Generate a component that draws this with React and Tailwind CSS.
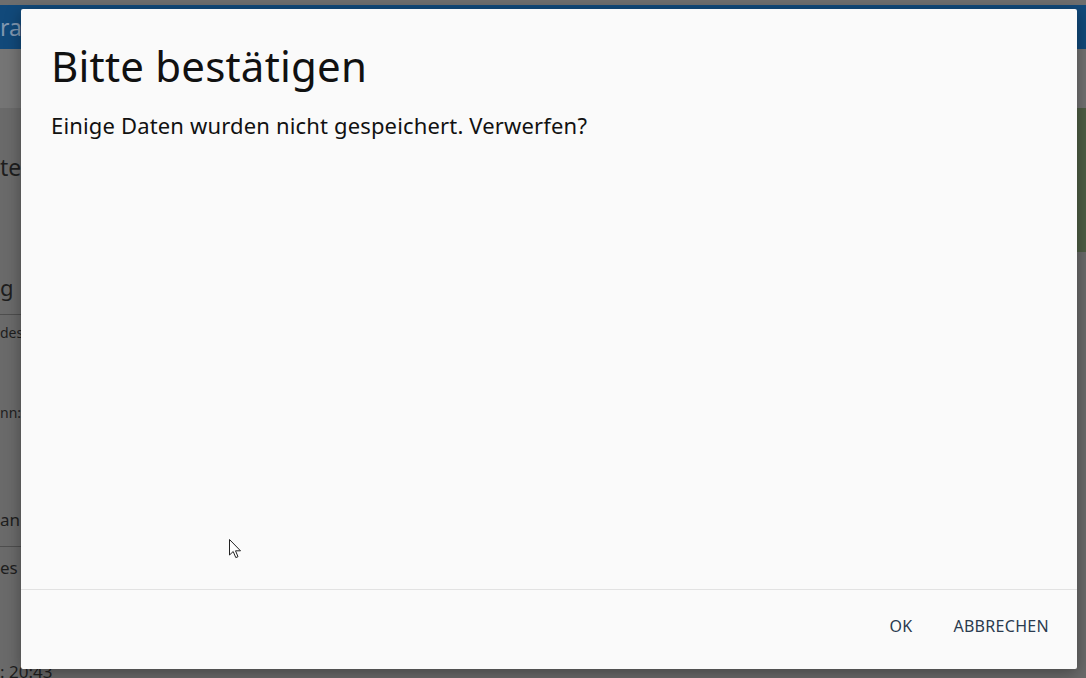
import React from "react";

export default function App() {
  const font = { fontFamily: '"Noto Sans", "Open Sans", sans-serif' };
  return (
    <div className="relative w-[1086px] h-[678px] overflow-hidden bg-[#6a6a6a]" style={font}>
      {/* background app (dimmed) */}
      <div className="flex flex-col w-full h-full">
        <div className="h-[5px] shrink-0 bg-[#6e6e6e]" />
        <div className="h-[44px] shrink-0 bg-[#11497a] flex items-center">
          <span className="text-[23px] text-[#8097b0] leading-none whitespace-nowrap">ra</span>
        </div>
        <div className="flex flex-1 min-h-0 overflow-hidden">
          <div className="flex-1 flex flex-col">
            <div className="h-[59px] shrink-0 bg-[#757575]" />
            <div className="flex flex-col shrink-0 text-[#1e1e1e]">
              <div className="h-[44px] shrink-0" />
              <div className="text-[23px] leading-[30px] whitespace-nowrap">tel</div>
              <div className="h-[90px] shrink-0" />
              <div className="text-[22px] leading-[30px] whitespace-nowrap">g</div>
              <div className="h-[13px] shrink-0 border-b border-[#4e4e4e]" />
              <div className="h-[8px] shrink-0" />
              <div className="text-[14px] leading-[20px] whitespace-nowrap">des</div>
              <div className="h-[60px] shrink-0" />
              <div className="text-[14px] leading-[20px] whitespace-nowrap">nn:</div>
              <div className="h-[85px] shrink-0" />
              <div className="text-[17px] leading-[24px] whitespace-nowrap">an</div>
              <div className="h-[15px] shrink-0 border-b border-[#4e4e4e]" />
              <div className="h-[9px] shrink-0" />
              <div className="text-[17px] leading-[24px] whitespace-nowrap">es T</div>
              <div className="h-[80px] shrink-0" />
              <div className="text-[17px] leading-[24px] whitespace-nowrap">: 20:43</div>
            </div>
          </div>
          <div className="w-[9px] shrink-0 flex flex-col">
            <div className="h-[59px] shrink-0 bg-[#717171]" />
            <div className="h-[144px] shrink-0 bg-[#4e5d44]" />
            <div className="flex-1 bg-[#6a6a6a]" />
          </div>
        </div>
      </div>

      {/* dialog */}
      <div className="absolute left-[21px] top-[9px] w-[1056px] h-[660px] bg-[#fafafa] rounded-[2px] shadow-[0_4px_16px_rgba(0,0,0,0.35)] flex flex-col">
        <div className="flex-1 flex flex-col px-[30px] pt-[27px]">
          <h1 className="text-[42px] leading-[60px] text-[#111] font-normal whitespace-nowrap tracking-[0.2px]">
            Bitte bestätigen
          </h1>
          <p className="mt-[14px] text-[22px] leading-[30px] text-[#111] whitespace-nowrap tracking-[0.16px]">
            Einige Daten wurden nicht gespeichert. Verwerfen?
          </p>
        </div>
        <div className="h-[80px] shrink-0 border-t border-[#e2e2e2] flex items-start pt-[18px] justify-end pr-[18px] gap-[21px]">
          <button className="px-[10px] h-[36px] text-[16px] text-[#2a3b4f] uppercase tracking-[0.2px]">OK</button>
          <button className="px-[10px] h-[36px] text-[16px] text-[#2a3b4f] uppercase tracking-[0.3px]">Abbrechen</button>
        </div>
      </div>

      {/* mouse cursor */}
      <svg className="absolute left-[229px] top-[539px]" width="13" height="20" viewBox="0 0 13 20">
        <path d="M0.5 0.5 L0.5 16 L4.2 12.5 L6.8 18.6 L9 17.7 L6.5 11.8 L11.5 11.8 Z" fill="#fff" stroke="#222" strokeWidth="1" strokeLinejoin="round" />
      </svg>
    </div>
  );
}
